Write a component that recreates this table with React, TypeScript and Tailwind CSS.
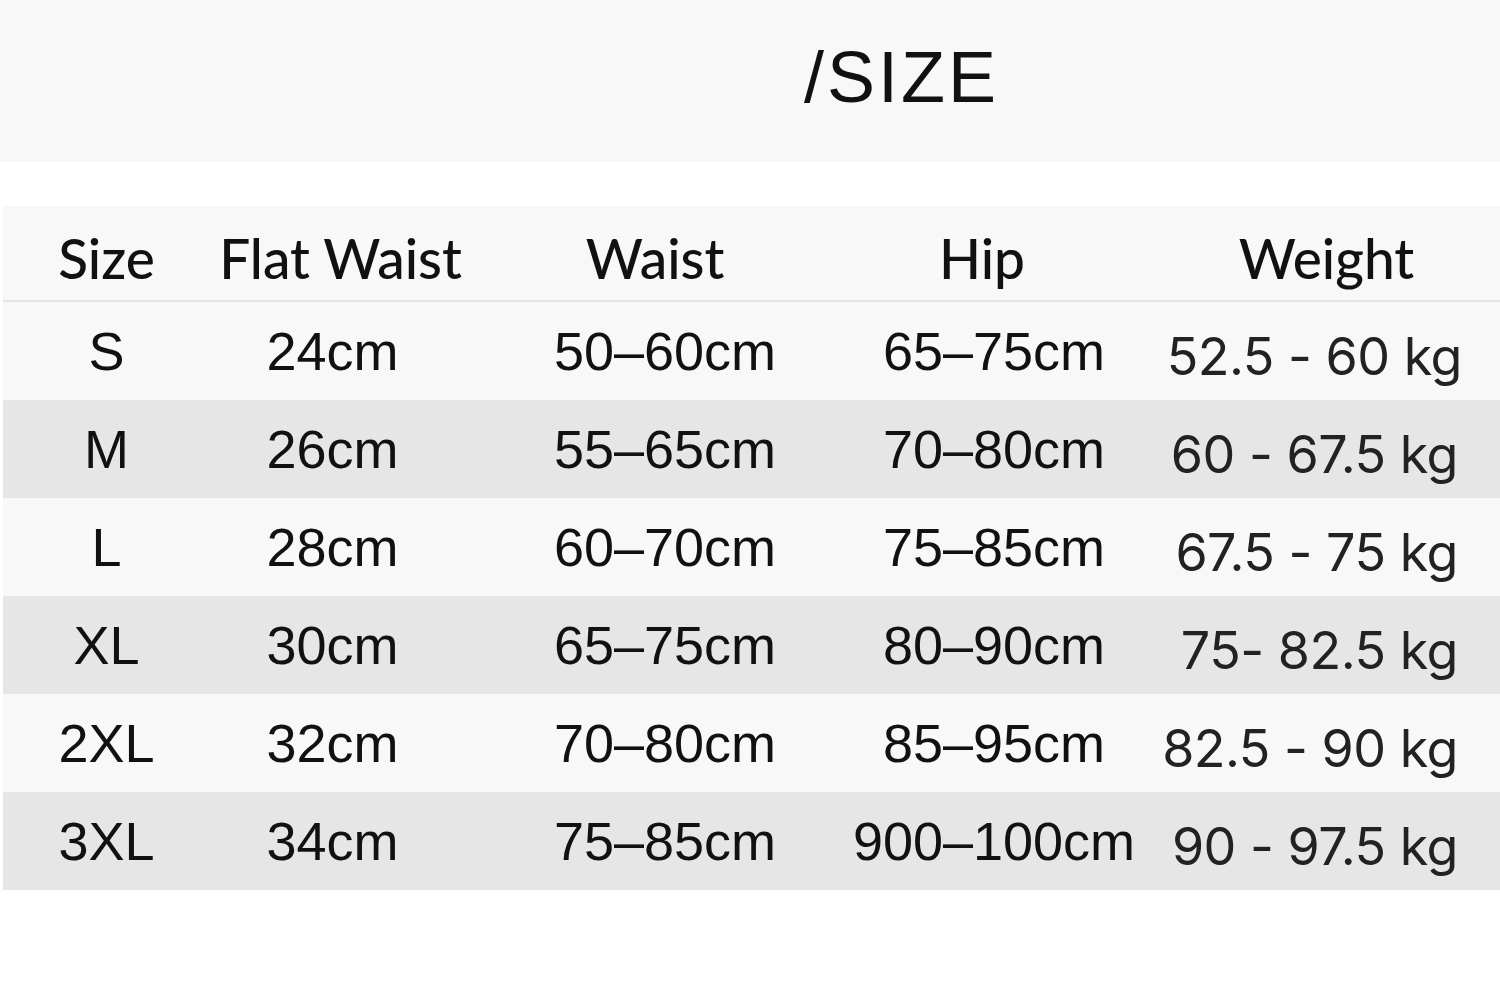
import React from "react";

const rows = [
  { s: "S", f: "24cm", w: "50–60cm", h: "65–75cm", kg: "52.5 - 60 kg", gray: false },
  { s: "M", f: "26cm", w: "55–65cm", h: "70–80cm", kg: "60 - 67.5 kg", gray: true },
  { s: "L", f: "28cm", w: "60–70cm", h: "75–85cm", kg: "67.5 - 75 kg", gray: false },
  { s: "XL", f: "30cm", w: "65–75cm", h: "80–90cm", kg: "75- 82.5 kg", gray: true },
  { s: "2XL", f: "32cm", w: "70–80cm", h: "85–95cm", kg: "82.5 - 90 kg", gray: false },
  { s: "3XL", f: "34cm", w: "75–85cm", h: "900–100cm", kg: "90 - 97.5 kg", gray: true },
];

const grid = "grid grid-cols-[207px_245px_420px_238px_387px]";
const val = "flex justify-center whitespace-nowrap text-[54px] leading-none text-[#111] font-['Liberation_Sans',Arial,sans-serif]";

export default function App() {
  return (
    <div className="w-[1500px] h-[992px] bg-white overflow-hidden">
      <div className="h-[162px] bg-[#f8f8f8] flex items-start pl-[804px] pt-[41px]">
        <span className="text-[72px] leading-none tracking-[3px] text-[#111] font-['Liberation_Sans',Arial,sans-serif]">
          /SIZE
        </span>
      </div>
      <div className="h-[44px]" />
      <div className="ml-[3px]">
        <div className={`${grid} h-[96px] bg-[#f8f8f8] border-b-2 border-[#e4e4e4] items-center text-[#111] font-['Lato',sans-serif] font-medium text-[55px] leading-none pt-[10px]`}>
          <div className="flex justify-center whitespace-nowrap">Size</div>
          <div className="flex justify-center whitespace-nowrap pl-[16px]">Flat Waist</div>
          <div className="flex justify-center whitespace-nowrap pr-[20px]">Waist</div>
          <div className="flex justify-center whitespace-nowrap pr-[24px]">Hip</div>
          <div className="flex justify-center whitespace-nowrap pl-[40px]">Weight</div>
        </div>
        {rows.map((r, i) => (
          <div
            key={r.s}
            className={`${grid} h-[98px] items-center ${r.gray ? "bg-[#e6e6e6]" : "bg-[#f8f8f8]"}`}
          >
            <div className={val}>{r.s}</div>
            <div className={val}>{r.f}</div>
            <div className={val}>{r.w}</div>
            <div className={val}>{r.h}</div>
            <div className={`flex justify-end whitespace-nowrap ${i === 0 ? "pr-[38px]" : "pr-[42px]"} pt-[12px] text-[52px] tracking-[-0.5px] leading-none text-[#222] font-['Inter',sans-serif]`}>{r.kg}</div>
          </div>
        ))}
      </div>
    </div>
  );
}
